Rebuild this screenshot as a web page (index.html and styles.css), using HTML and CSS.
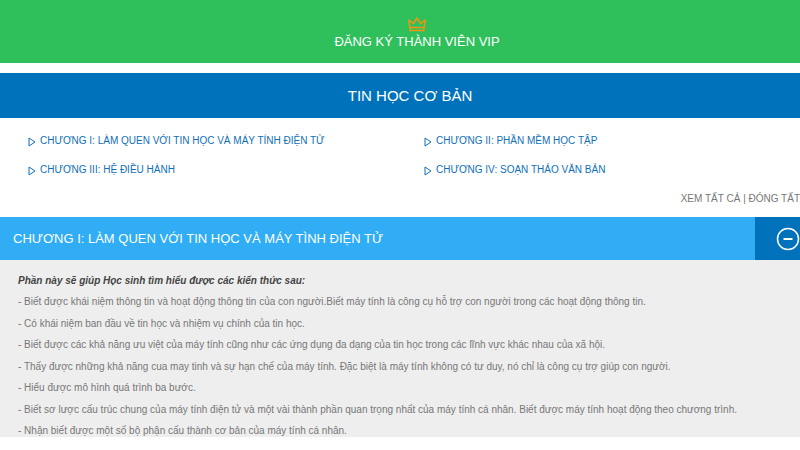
FILE: index.html
```html
<!DOCTYPE html>
<html lang="vi">
<head>
<meta charset="utf-8">
<title>Tin học cơ bản</title>
<link rel="stylesheet" href="styles.css">
</head>
<body>
<a class="vip" href="#vip">
  <svg class="crown" viewBox="0 0 20 16" aria-hidden="true"><path d="M1.8 4 6.4 7.6 10 2 13.6 7.6 18.2 4 16.8 14.6H3.2ZM2.8 11.4H17.2"/></svg>
  <span>ĐĂNG KÝ THÀNH VIÊN VIP</span>
</a>
<main class="course">
  <h1 class="title">TIN HỌC CƠ BẢN</h1>
  <nav class="chapters">
    <a href="#c1"><svg viewBox="0 0 8 10" aria-hidden="true"><path d="M1 1 7 5 1 9Z"/></svg>CHƯƠNG I: LÀM QUEN VỚI TIN HỌC VÀ MÁY TÍNH ĐIỆN TỬ</a>
    <a href="#c2"><svg viewBox="0 0 8 10" aria-hidden="true"><path d="M1 1 7 5 1 9Z"/></svg>CHƯƠNG II: PHẦN MỀM HỌC TẬP</a>
    <a href="#c3"><svg viewBox="0 0 8 10" aria-hidden="true"><path d="M1 1 7 5 1 9Z"/></svg>CHƯƠNG III: HỆ ĐIỀU HÀNH</a>
    <a href="#c4"><svg viewBox="0 0 8 10" aria-hidden="true"><path d="M1 1 7 5 1 9Z"/></svg>CHƯƠNG IV: SOẠN THẢO VĂN BẢN</a>
  </nav>
  <div class="toggles"><a href="#all">XEM TẤT CẢ</a> | <a href="#none">ĐÓNG TẤT</a></div>
  <section class="chapter" id="c1">
    <div class="bar">
      <h2>CHƯƠNG I: LÀM QUEN VỚI TIN HỌC VÀ MÁY TÌNH ĐIỆN TỬ</h2>
      <button class="collapse" type="button" aria-label="Đóng chương I"><svg viewBox="0 0 24 24" aria-hidden="true"><circle cx="12" cy="12" r="10.5"/><path d="M7.5 12H16.5"/></svg></button>
    </div>
    <div class="content">
      <p class="lead">Phần này sẽ giúp Học sinh tìm hiểu được các kiến thức sau:</p>
      <p>- Biết được khái niệm thông tin và hoạt động thông tin của con người.Biết máy tính là công cụ hỗ trợ con người trong các hoạt động thông tin.</p>
      <p>- Có khái niệm ban đầu về tin học và nhiệm vụ chính của tin học.</p>
      <p>- Biết được các khả năng ưu việt của máy tính cũng như các ứng dụng đa dạng của tin học trong các lĩnh vực khác nhau của xã hội.</p>
      <p>- Thấy được những khả năng cua may tinh và sự hạn chế của máy tính. Đặc biệt là máy tính không có tư duy, nó chỉ là công cụ trợ giúp con người.</p>
      <p>- Hiểu được mô hình quá trình ba bước.</p>
      <p>- Biết sơ lược cấu trúc chung của máy tính điện tử và một vài thành phần quan trọng nhất của máy tính cá nhân. Biết được máy tính hoạt động theo chương trình.</p>
      <p>- Nhận biết được một số bộ phận cấu thành cơ bản của máy tính cá nhân.</p>
    </div>
  </section>
</main>
</body>
</html>
```
FILE: styles.css
```css
* { box-sizing: border-box; }
body {
  display: flex;
  flex-direction: column;
  min-height: 100vh;
  margin: 0;
  padding-bottom: 13px;
  overflow: hidden;
  background: #fff;
  color: #777;
  font-family: "Liberation Sans", Arial, sans-serif;
  font-size: 10px;
}
a { color: inherit; text-decoration: none; }
h1, h2, p { margin: 0; font-weight: 400; }

/* The banner and the course column run past the right edge of the window. */
.vip {
  display: flex;
  flex-direction: column;
  align-items: center;
  width: calc(100% + 34px);
  padding: 16px 0 12px;
  background: #2fc05c;
  color: #fff;
  font-size: 13px;
  line-height: 19px;
}
.crown { width: 20px; height: 16px; fill: none; stroke: #ee9412; stroke-width: 1.5; stroke-linejoin: round; }

.course {
  display: flex;
  flex: 1;
  flex-direction: column;
  width: calc(100% + 20px);
  margin-top: 10px;
}
.title {
  padding: 12px 0;
  background: #0072bc;
  color: #fff;
  font-size: 15px;
  line-height: 21px;
  text-align: center;
}
.chapters {
  display: grid;
  grid-template-columns: 1fr 1fr;
  padding: 8px 0 0 28px;
  color: #0f6fb9;
  line-height: 29px;
}
.chapters a { display: flex; align-items: center; gap: 4px; }
.chapters svg { width: 8px; height: 10px; margin-top: 3px; fill: none; stroke: currentColor; }
.toggles {
  padding: 4px 20px 8px 0;
  line-height: 21px;
  text-align: right;
}

.chapter { display: flex; flex: 1; flex-direction: column; }
.bar { display: flex; background: #30adf5; color: #fff; }
.bar h2 { flex: 1; padding: 0 13px; font-size: 13px; line-height: 43px; }
.collapse {
  display: grid;
  place-items: center;
  width: 65px;
  padding: 0;
  border: 0;
  background: #0072bc;
}
.collapse svg { width: 24px; height: 24px; fill: none; stroke: #fff; stroke-width: 1.5; }
.collapse path { stroke-width: 2; }

.content {
  display: flex;
  flex: 1;
  flex-direction: column;
  justify-content: space-between;
  padding: 15px 18px 0;
  background: #eee;
  line-height: 12px;
}
.lead { color: #444; font-weight: 700; font-style: italic; }
```
